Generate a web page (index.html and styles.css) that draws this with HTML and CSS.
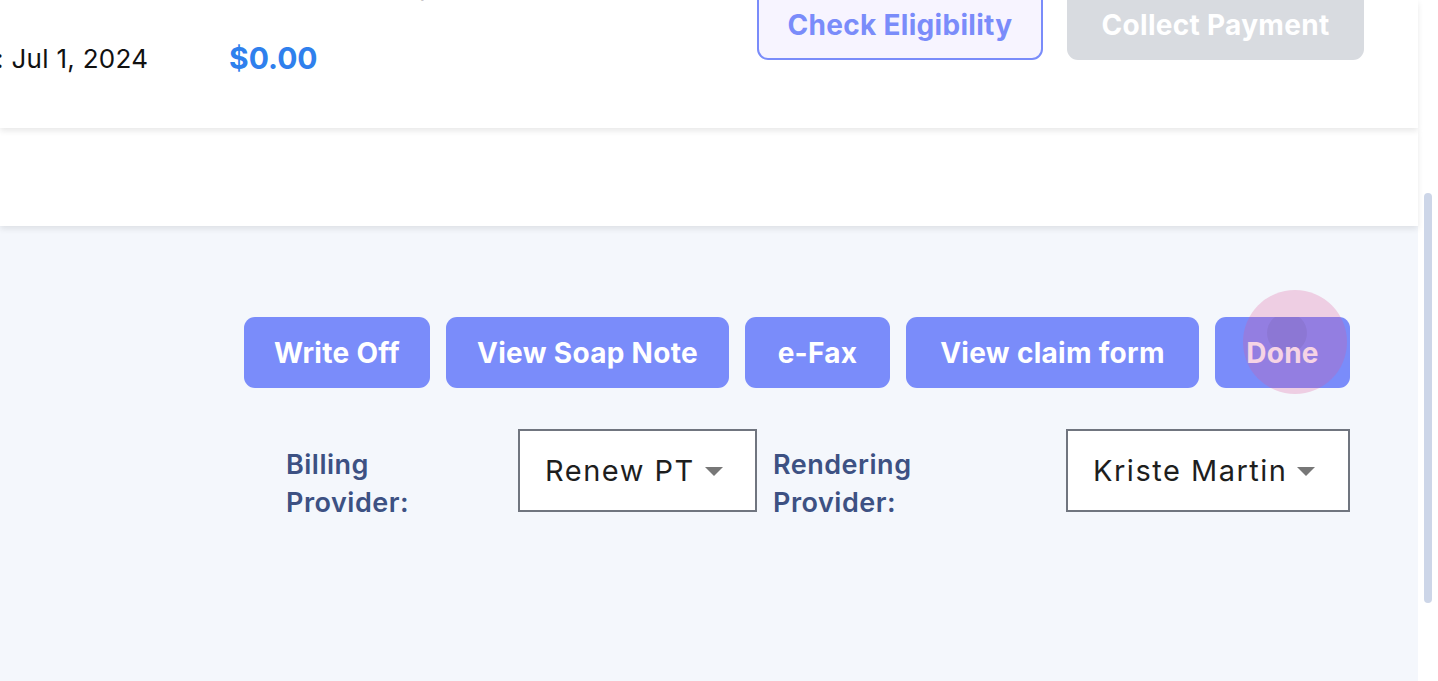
FILE: index.html
```html
<!DOCTYPE html>
<html lang="en">
<head>
<meta charset="utf-8">
<title>Billing</title>
<link rel="stylesheet" href="styles.css">
</head>
<body>
<div class="app">
  <div class="main">
    <section class="card card-top">
      <div class="info">
        <div class="heading">Encounter Billing</div>
        <div class="meta">
          <span class="date">: Jul 1, 2024</span>
          <span class="amount">$0.00</span>
        </div>
      </div>
      <div class="top-actions">
        <button class="btn btn-outline btn-eligibility">Check Eligibility</button>
        <button class="btn btn-disabled btn-collect">Collect Payment</button>
      </div>
    </section>
    <section class="card card-second"></section>
    <section class="content">
      <div class="actions">
        <button class="btn btn-primary btn-writeoff">Write Off</button>
        <button class="btn btn-primary btn-soap">View Soap Note</button>
        <button class="btn btn-primary btn-fax">e-Fax</button>
        <button class="btn btn-primary btn-claim">View claim form</button>
        <span class="done-wrap">
          <button class="btn btn-primary btn-done"><span class="ripple"></span><span class="btn-label">Done</span></button>
          <span class="touch"></span>
        </span>
      </div>
      <div class="providers">
        <div class="prov-label prov-label-billing">Billing<br>Provider:</div>
        <div class="select select-billing"><span class="select-value">Renew PT</span><span class="caret"></span></div>
        <div class="prov-label prov-label-rendering">Rendering<br>Provider:</div>
        <div class="select select-rendering"><span class="select-value">Kriste Martin</span><span class="caret"></span></div>
      </div>
    </section>
  </div>
  <div class="scrollbar"><div class="thumb"></div></div>
</div>
</body>
</html>
```
FILE: styles.css
```css
* { box-sizing: border-box; }
html, body { margin: 0; padding: 0; }
body {
  font-family: "Inter", "Noto Sans", sans-serif;
  color: #1c1c1c;
  background: #ffffff;
  overflow: hidden;
}
.app {
  display: flex;
  width: 1438px;
  height: 681px;
  overflow: hidden;
}
.main {
  width: 1418px;
  display: flex;
  flex-direction: column;
  background: #f4f7fc;
}
.scrollbar {
  width: 20px;
  background: #ffffff;
  padding: 193px 6px 0 6px;
}
.thumb {
  width: 8px;
  height: 410px;
  border-radius: 4px;
  background: #cdd6e8;
}
.card {
  background: #ffffff;
  position: relative;
}
.card-top {
  height: 128px;
  display: flex;
  justify-content: space-between;
  align-items: flex-start;
  padding-right: 54px;
  z-index: 2;
  box-shadow: 0 3px 6px rgba(0, 0, 0, 0.09);
}
.card-second {
  height: 98px;
  z-index: 1;
  box-shadow: 0 3px 6px rgba(0, 0, 0, 0.09);
}
.info {
  display: flex;
  flex-direction: column;
  margin-top: -30px;
}
.heading {
  font-size: 26px;
  font-weight: 500;
  line-height: 32px;
  height: 32px;
  margin-left: 222px;
  color: #1c1c1c;
}
.meta {
  display: flex;
  align-items: center;
  height: 36px;
  margin-top: 38px;
}
.date {
  width: 233px;
  margin-left: -4px;
  font-size: 26px;
  font-weight: 400;
  letter-spacing: 0.3px;
  color: #111111;
}
.amount {
  font-size: 30px;
  font-weight: 700;
  color: #2f80ed;
}
.top-actions {
  display: flex;
  gap: 24px;
  margin-top: -11px;
}
.btn {
  height: 71px;
  border: none;
  border-radius: 11px;
  font-family: inherit;
  font-size: 28px;
  font-weight: 700;
  letter-spacing: 0.3px;
  display: inline-flex;
  align-items: center;
  justify-content: center;
  padding: 0;
}
.btn-outline {
  background: #f7f4ff;
  border: 2px solid #7a8cfa;
  color: #7a8cfa;
}
.btn-disabled {
  background: #d8dbe0;
  color: #ffffff;
}
.btn-primary {
  background: #7a8cfa;
  color: #ffffff;
}
.btn-eligibility { width: 286px; }
.btn-collect { width: 297px; }
.btn-writeoff { width: 186px; }
.btn-soap { width: 283px; }
.btn-fax { width: 145px; }
.btn-claim { width: 293px; }
.btn-done {
  width: 135px;
  position: relative;
  overflow: hidden;
}
.btn-label { position: relative; }
.ripple {
  position: absolute;
  left: 52px;
  top: -4px;
  width: 40px;
  height: 40px;
  border-radius: 50%;
  background: rgba(0, 0, 0, 0.07);
}
.content {
  flex: 1;
  padding: 91px 68px 0 0;
}
.actions {
  display: flex;
  justify-content: flex-end;
  gap: 16px;
}
.done-wrap {
  position: relative;
  display: inline-flex;
}
.touch {
  position: absolute;
  left: 28px;
  top: -27px;
  width: 104px;
  height: 104px;
  border-radius: 50%;
  background: rgba(220, 90, 154, 0.26);
  pointer-events: none;
}
.providers {
  display: flex;
  justify-content: flex-end;
  align-items: flex-start;
  margin-top: 41px;
}
.prov-label {
  padding-top: 17px;
  font-size: 27px;
  line-height: 38px;
  font-weight: 600;
  letter-spacing: 0.5px;
  color: #3d5183;
}
.prov-label-billing { width: 232px; }
.prov-label-rendering { width: 293px; margin-left: 16px; }
.select {
  height: 83px;
  border: 2px solid #70757f;
  background: #ffffff;
  display: flex;
  align-items: center;
  padding-left: 25px;
  gap: 10px;
}
.select-billing { width: 239px; }
.select-rendering { width: 284px; }
.select-value {
  font-size: 29px;
  font-weight: 400;
  letter-spacing: 1.5px;
  color: #1e1e1e;
}
.caret {
  width: 0;
  height: 0;
  border-left: 9.5px solid transparent;
  border-right: 9.5px solid transparent;
  border-top: 9px solid #777777;
  margin-top: 2px;
}
```
